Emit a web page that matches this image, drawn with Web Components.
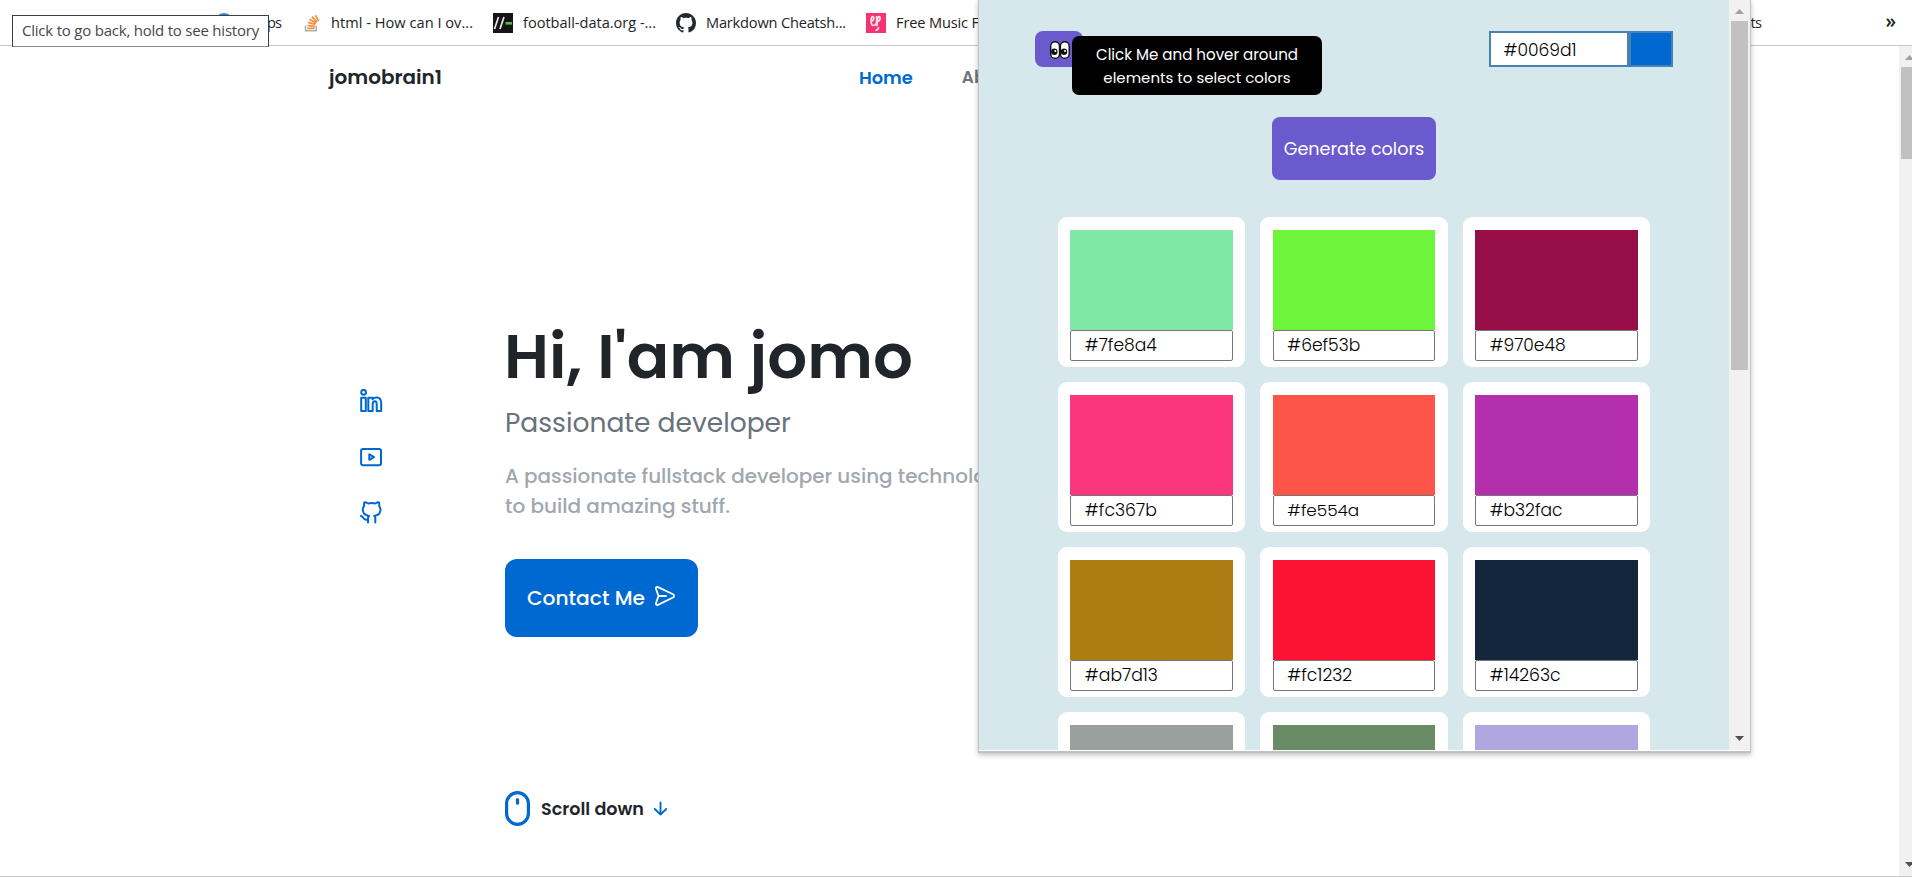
<!DOCTYPE html>
<html lang="en">
<head>
<meta charset="utf-8">
<title>jomobrain1</title>
<style>
html,body{margin:0;height:877px;overflow:hidden;background:#fff}
body{font-family:Poppins,Inter,"Open Sans",sans-serif;position:relative}
</style>
</head>
<body>
<browser-window></browser-window>
<script>
const define=(name,html,setup)=>customElements.define(name,class extends HTMLElement{
  connectedCallback(){
    if(this.shadowRoot)return;
    this.attachShadow({mode:'open'}).innerHTML=html;
    if(setup)setup(this,this.shadowRoot);
  }
});

define('browser-window',`
<style>
:host{display:flex;flex-direction:column;height:877px;width:1912px;position:relative;overflow:hidden}
.view{flex:1;display:flex;min-height:0;border-bottom:1px solid #c9c9c9}
portfolio-page{flex:1}
palette-popup{position:absolute;left:978px;top:0}
back-hint{position:absolute;left:12px;top:15px}
</style>
<bookmarks-bar></bookmarks-bar>
<div class="view"><portfolio-page></portfolio-page><scroll-track style="width:13px;--size:92px;--pad:2px;--edge:0px"></scroll-track></div>
<palette-popup></palette-popup>
<back-hint></back-hint>`);

define('back-hint',`
<style>
:host{display:flex;align-items:center;box-sizing:border-box;width:257px;height:32px;padding:0 0 2px 9px;background:#fff;border:1px solid #404040;border-bottom-color:#888;color:#474747;font:15px/28px "Open Sans",sans-serif}
</style><fit-text w="237">Click to go back, hold to see history</fit-text>`);

define('bookmark-item',`
<style>
:host{display:flex;align-items:center;gap:10px;height:20px;white-space:nowrap}
::slotted(svg){display:block;width:20px;height:20px;flex:none}
::slotted(fit-text){margin-bottom:1px}
</style><slot name="icon"></slot><slot></slot>`);

define('bookmarks-bar',`
<style>
:host{display:flex;align-items:center;gap:20px;height:45px;border-bottom:1px solid #c9c9c9;padding:0 16px 0 214px;color:#242424;font:14.6px/20px "Open Sans",sans-serif;background:#fff}
.first fit-text{margin-left:23px}
.last{margin-left:auto}
.more{margin-left:104px;font-weight:600;font-size:19px;line-height:16px;margin-bottom:4px}
</style>
<bookmark-item class="first"><svg slot="icon" viewBox="0 0 20 20"><circle cx="10" cy="10" r="10" fill="#3b82e8"/></svg><fit-text w="14">ps</fit-text></bookmark-item>
<bookmark-item><svg slot="icon" viewBox="0 0 20 20"><path d="M4.500 12.500v5.200h10.800v-5.200" fill="none" stroke="#a9adb5" stroke-width="1.500"/><g stroke="#f48d3b" stroke-width="1.700"><path d="M6.200 15.300h7.500M6.400 12.500l7.400.8M7 9.400l7.200 2M8.500 6.200l6.600 3.700M10.900 3.600l5.200 5.500M14.300 2.200l3.400 6"/></g></svg><fit-text w="142">html - How can I ov...</fit-text></bookmark-item>
<bookmark-item><svg slot="icon" viewBox="0 0 20 20"><path fill="#151515" d="M0 0h20v20H0z"/><path d="M1.500 16L5.500 4M7 16L11 4" stroke="#e8e8e8" stroke-width="1.700"/><path d="M12.500 10.300h6.500" stroke="#58b947" stroke-width="2.600"/></svg><fit-text w="133">football-data.org -...</fit-text></bookmark-item>
<bookmark-item><svg slot="icon" viewBox="0 0 16 16"><path fill="#24292e" d="M8 0C3.580 0 0 3.580 0 8c0 3.540 2.290 6.530 5.470 7.590.4.070.55-.17.55-.38 0-.19-.01-.82-.01-1.490-2.010.37-2.530-.49-2.690-.94-.09-.23-.48-.94-.82-1.130-.28-.15-.68-.52-.01-.53.63-.01 1.080.58 1.230.82.72 1.210 1.870.87 2.330.66.07-.52.28-.87.51-1.070-1.780-.2-3.640-.89-3.640-3.950 0-.87.31-1.590.82-2.150-.08-.2-.36-1.020.08-2.120 0 0 .67-.21 2.200.82.64-.18 1.320-.27 2-.27s1.360.09 2 .27c1.530-1.040 2.200-.82 2.200-.82.44 1.100.16 1.920.08 2.120.51.56.82 1.270.82 2.150 0 3.070-1.870 3.750-3.650 3.950.29.25.54.73.54 1.480 0 1.070-.01 1.930-.01 2.200 0 .21.15.46.55.38A8.010 8.010 0 0016 8c0-4.420-3.580-8-8-8z"/></svg><fit-text w="140">Markdown Cheatsh...</fit-text></bookmark-item>
<bookmark-item><svg slot="icon" viewBox="0 0 20 20"><path fill="#f5336f" d="M0 0h20v20H0z"/><g fill="none" stroke="#ffe3ec" stroke-width="1.700" stroke-linecap="round"><path d="M5 8c3 0 3.600-4.500 1.800-4.300C4.400 4 4.300 12.500 7.500 12.500c1.900 0 3-2 3.200-4.700V3.500M10.700 8.500c3.600.3 4.300-4.800 2.300-4.800-2.100 0-1.800 7.500-2 9"/><path d="M10 17.300c1.200-.2 2.300-1.100 2.600-2.500"/></g></svg><fit-text w="83">Free Music F</fit-text></bookmark-item>
<bookmark-item class="last"><fit-text w="11">ts</fit-text></bookmark-item>
<span class="more">»</span>`);

define('portfolio-page',`
<style>
:host{display:flex;flex-direction:column;background:#fff;color:#212529;overflow:hidden}
header{display:flex;align-items:center;height:62px;padding-left:329px;font-size:17px;font-weight:600}
nav{display:flex;gap:49px;margin-left:417px;color:#6c757d}
nav .on{color:#0069d1}
.body{display:flex;align-items:flex-start}
social-links{margin:281px 121px 0 360px}
hero-intro{margin-top:210px}
</style>
<header><fit-text scale class="logo" w="113">jomobrain1</fit-text><nav><fit-text scale class="on" w="54">Home</fit-text><fit-text scale w="52">About</fit-text></nav></header>
<div class="body"><social-links></social-links><hero-intro></hero-intro></div>`);

define('social-links',`
<style>
:host{display:flex;flex-direction:column;gap:32px;width:24px}
svg{display:block;width:24px;height:24px;fill:none;stroke:#0069d1;stroke-width:2;stroke-linejoin:round;stroke-linecap:round}
svg:last-child{margin-top:-1px}
</style>
<svg viewBox="0 0 24 24"><g stroke-width="2"><circle cx="3.600" cy="3.300" r="2.400"/><path d="M1.200 8.700h4.600v13.300H1.200zM8.300 8.700h4.300v1.500c1-1.300 2.500-1.800 4.300-1.700 3 .2 4.300 2.200 4.300 5.600V22h-4.500v-7.300c0-1.500-.6-2.500-1.900-2.500-1.400 0-2.100 1-2.100 2.600V22H8.300z"/></g></svg>
<svg viewBox="0 0 24 24"><rect x="1.100" y="3.900" width="19.900" height="16.300" rx="2"/><path d="M9.300 9.300v5.500l4.700-2.750z"/></svg>
<svg viewBox="0 0 24 24"><path d="M1 16c1.500.2 2 1.200 2.600 2.200.9 1.500 2.200 1.800 4.300 1.400M8 22.500v-4.700c.1-.9.5-1.500 1.100-1.900-3.400-.4-6.300-1.900-6.300-6.400 0-1.500.5-2.700 1.400-3.700-.3-1-.2-2.200.2-3.500 1.400 0 2.600.5 3.700 1.200 2.600-.7 4.500-.7 7.100 0 1.100-.7 2.300-1.200 3.700-1.200.4 1.300.5 2.500.2 3.500.9 1 1.400 2.200 1.400 3.700 0 4.500-2.900 6-6.300 6.400.6.400 1 1 1.100 1.900v4.700"/></svg>`);

define('hero-intro',`
<style>
:host{display:block;white-space:nowrap}
h1,h2,p{margin:0}
h1{font-size:63px;line-height:76px;height:76px;font-weight:600;margin-left:-1px}
h2{margin-top:14px;font-size:26px;line-height:30px;height:30px;font-weight:400;color:#68727b}
p{margin-top:23px;font-size:20px;line-height:30px;height:60px;font-weight:500;color:#a1a7ae}
.cta{display:flex;align-items:center;box-sizing:border-box;width:193px;height:78px;margin:38px 0 0;padding-left:22px;gap:10px;border-radius:12px;background:#0069d1;color:#fff;font-size:20px;font-weight:500}
.cta svg{margin-bottom:4px}
.scroll{display:flex;align-items:center;height:35px;margin:154px 0 0;font-size:16.500px;font-weight:600}
.scroll fit-text{margin:0 9px 0 11px}
svg{display:block}
</style>
<h1><fit-text scale w="409">Hi, I'am jomo</fit-text></h1>
<h2><fit-text scale w="286">Passionate developer</fit-text></h2>
<p><fit-text scale w="523">A passionate fullstack developer using technologies</fit-text><br><fit-text scale w="225">to build amazing stuff.</fit-text></p>
<div class="cta"><fit-text scale w="118">Contact Me</fit-text><svg width="20" height="20" viewBox="0 0 20 20" fill="none" stroke="#fff" stroke-width="1.800" stroke-linejoin="round" stroke-linecap="round"><path d="M1 3c-.5-1.500.6-2.500 2-1.900l15 7.200c1.400.7 1.400 2.500 0 3.200L3 18.900c-1.500.6-2.500-.5-2-1.900L3.500 10zM3.500 10H11"/></svg></div>
<div class="scroll"><svg width="25" height="35" viewBox="0 0 25 35" fill="none" stroke="#0069d1" stroke-width="3.200" stroke-linecap="round"><rect x="1.600" y="1.600" width="21.800" height="31.800" rx="10.900"/><path d="M12.500 8.700v3.500"/></svg><fit-text scale w="103">Scroll down</fit-text><svg width="15" height="15" viewBox="0 0 15 15" fill="none" stroke="#0069d1" stroke-width="1.900" stroke-linecap="round" stroke-linejoin="round"><path d="M7.500 1.500v12M1.800 8l5.700 5.600L13.200 8"/></svg></div>`);

define('scroll-track',`
<style>
:host{display:flex;flex-direction:column;box-sizing:border-box;background:#f1f1f1;padding:9px 0 9px var(--pad);overflow:hidden}
svg{display:block;flex:none;width:9px;height:5px;margin-left:4px}
.thumb{height:var(--size);align-self:stretch;background:#c1c1c1;margin:7px var(--edge) auto 0}
</style>
<svg viewBox="0 0 9 5"><path fill="#a3a3a3" d="M0 5L4.500 0 9 5z"/></svg><div class="thumb"></div><svg viewBox="0 0 9 5"><path fill="#505050" d="M0 0h9L4.500 5z"/></svg>`);

define('palette-popup',`
<style>
:host{display:flex;box-sizing:border-box;width:773px;height:753px;border:1px solid #c2c2c2;border-top:0;border-bottom-width:2px;background:#fff;box-shadow:0 2px 5px rgba(0,0,0,.25);padding-bottom:1px}
.content{width:750px;height:750px;overflow:hidden;background:#d6e8eb;display:flex;flex-direction:column;align-items:center}
.content>*{flex:none}
.top{align-self:stretch;display:flex;justify-content:space-between;padding:31px 56px 0}
.pick{position:relative;width:48px;height:36px;border-radius:8px;background:#6a5acd}
.pick svg{display:block;margin:10px 0 0 15px}
.tip{position:absolute;left:37px;top:5px;width:250px;height:59px;box-sizing:border-box;padding-top:7px;border-radius:7px;background:#000;color:#fff;font-size:15px;line-height:23px;text-align:center;white-space:nowrap}
.tip fit-text{display:block;width:max-content;margin:0 auto}
.value{display:flex;box-sizing:border-box;width:184px;height:36px;border:2px solid #4682b4;background:#fff;font-size:16px;font-weight:300;line-height:34px;color:#000}
.value div{flex:1;padding-left:12.500px}
.value i{width:40px;background:#0069d1;border-left:4px solid #4682b4}
.gen{display:flex;align-items:center;justify-content:center;width:164px;height:63px;margin:50px 0 37px;border-radius:8px;background:#6a5acd;color:#fff;font-size:17px}
.grid{display:grid;grid-template-columns:repeat(3,187.400px);gap:15px;width:592px}
</style>
<div class="content">
<div class="top"><div class="pick"><svg width="20" height="18" viewBox="0 0 20 18"><g fill="#fff" stroke="#111" stroke-width="1.400"><rect x=".7" y=".7" width="8.800" height="16.600" rx="4.400"/><rect x="10.400" y=".7" width="8.800" height="16.600" rx="4.400"/></g><circle cx="4.300" cy="10.700" r="3.200" fill="#111"/><circle cx="14" cy="10.700" r="3.200" fill="#111"/><circle cx="5.300" cy="10" r="1" fill="#fff"/><circle cx="15" cy="10" r="1" fill="#fff"/></svg><div class="tip"><fit-text scale w="202">Click Me and hover around</fit-text><fit-text scale w="187.500">elements to select colors</fit-text></div></div>
<div class="value"><div><fit-text scale w="73">#0069d1</fit-text></div><i></i></div></div>
<div class="gen"><fit-text scale w="140.500">Generate colors</fit-text></div>
<div class="grid"></div>
</div><scroll-track style="width:21px;--size:349px;--pad:2px;--edge:2px"></scroll-track>`,(host,root)=>{
  const colors=[['#7fe8a4',72],['#6ef53b',73],['#970e48',76],['#fc367b',72],['#fe554a',72],['#b32fac',73],['#ab7d13',73],['#fc1232',65],['#14263c',71],['#9aa09e'],['#698b66'],['#b0a7e0']];
  root.querySelector('.grid').innerHTML=colors.map(([c,w])=>`<color-card style="--c:${c}">${w?`<fit-text scale w="${w}">${c}</fit-text>`:''}</color-card>`).join('');
});

define('color-card',`
<style>
:host{display:flex;flex-direction:column;box-sizing:border-box;height:150px;padding:13px 12.350px 6px;border-radius:9px;background:#fff}
.swatch{height:100px;background:var(--c)}
.hex{box-sizing:border-box;height:31px;border:1px solid #767676;border-radius:2px;padding-left:13.500px;font-size:16px;font-weight:300;line-height:29px;color:#000}
</style><div class="swatch"></div><div class="hex"><slot></slot></div>`);

/* Label that occupies the width given in "w": by its font size with "scale", else by letter spacing. */
define('fit-text',`<style>:host{display:inline-block;white-space:nowrap}</style><slot></slot>`,host=>{
  const n=host.textContent.length,w=+host.getAttribute('w'),now=host.getBoundingClientRect().width;
  if(host.hasAttribute('scale'))host.style.fontSize=(parseFloat(getComputedStyle(host).fontSize)*w/now).toFixed(2)+'px';
  else host.style.letterSpacing=((w-now)/n)+'px';
});
</script>
</body>
</html>
